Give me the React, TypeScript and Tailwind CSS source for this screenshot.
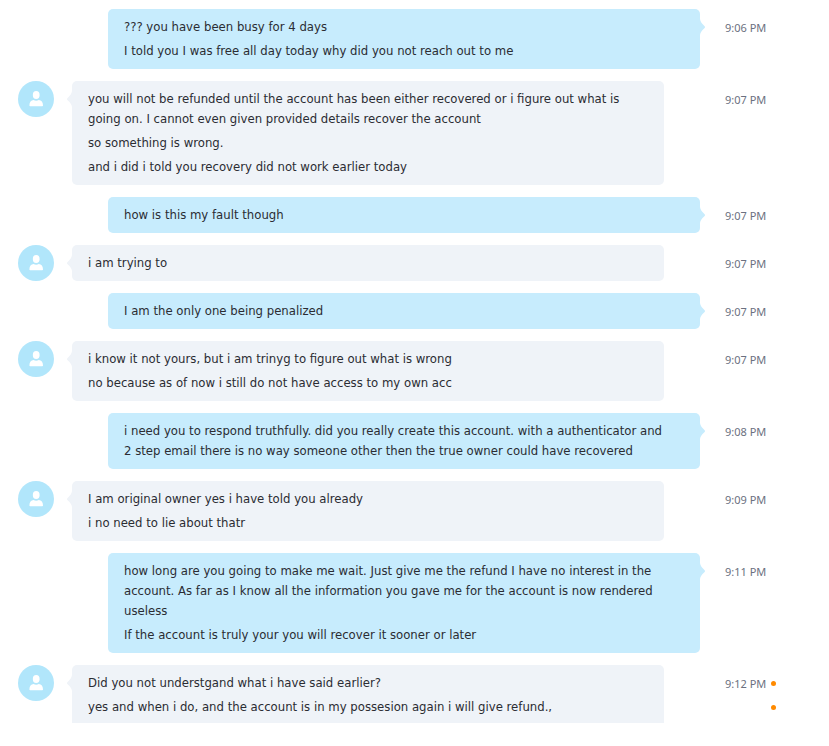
type Message = {
  own?: boolean;
  time: string;
  lines: string[];
  unread?: boolean;
};

const messages: Message[] = [
  {
    own: true,
    time: "9:06 PM",
    lines: [
      "??? you have been busy for 4 days",
      "I told you I was free all day today why did you not reach out to me",
    ],
  },
  {
    time: "9:07 PM",
    lines: [
      "you will not be refunded until the account has been either recovered or i figure out what is going on. I cannot even given provided details recover the account",
      "so something is wrong.",
      "and i did i told you recovery did not work earlier today",
    ],
  },
  { own: true, time: "9:07 PM", lines: ["how is this my fault though"] },
  { time: "9:07 PM", lines: ["i am trying to"] },
  { own: true, time: "9:07 PM", lines: ["I am the only one being penalized"] },
  {
    time: "9:07 PM",
    lines: [
      "i know it not yours, but i am trinyg to figure out what is wrong",
      "no because as of now i still do not have access to my own acc",
    ],
  },
  {
    own: true,
    time: "9:08 PM",
    lines: [
      "i need you to respond truthfully. did you really create this account. with a authenticator and 2 step email there is no way someone other then the true owner could have recovered",
    ],
  },
  {
    time: "9:09 PM",
    lines: ["I am original owner yes i have told you already", "i no need to lie about thatr"],
  },
  {
    own: true,
    time: "9:11 PM",
    lines: [
      "how long are you going to make me wait. Just give me the refund I have no interest in the account. As far as I know all the information you gave me for the account is now rendered useless",
      "If the account is truly your you will recover it sooner or later",
    ],
  },
  {
    time: "9:12 PM",
    unread: true,
    lines: [
      "Did you not understgand what i have said earlier?",
      "yes and when i do, and the account is in my possesion again i will give refund.,",
    ],
  },
];

function Avatar() {
  return (
    <div className="size-9 shrink-0 rounded-full bg-[#b1e6fb]">
      <svg viewBox="0 0 36 36" className="size-9" fill="#fff" aria-hidden="true">
        <ellipse cx="18.2" cy="14" rx="3.4" ry="4" />
        <path d="M12.2 25.2c-.5 0-.8-.3-.8-.8 0-3 1.6-5.2 4.2-5.300.8.5 1.600.7 2.600.7s1.800-.2 2.600-.7c2.600.1 4.200 2.300 4.200 5.300 0 .5-.3.8-.8.8z" />
      </svg>
    </div>
  );
}

function Tail({ own }: { own?: boolean }) {
  return (
    <svg
      viewBox="0 0 5 18"
      aria-hidden="true"
      className={
        own
          ? "absolute top-[9px] left-full h-[18px] w-[5px] text-[#c7ecfd]"
          : "absolute top-[9px] right-full h-[18px] w-[5px] -scale-x-100 text-[#eff3f8]"
      }
    >
      <path fill="currentColor" d="M0 1C.4 3.5 1.5 5.3 4.4 8 5.300 8.900 5.300 9.300 4.400 10.200 1.500 12.800.4 14.500 0 17z" />
    </svg>
  );
}

function MessageRow({ message, last }: { message: Message; last: boolean }) {
  const { own, lines, time, unread } = message;
  return (
    <li className="flex items-start">
      {own ? <div className="w-[90px] shrink-0" /> : <Avatar />}
      <div
        className={`relative flex min-w-0 flex-1 flex-col gap-1 pt-2 pr-8 pl-4 ${
          own ? "bg-[#c7ecfd]" : "mr-9 ml-[18px] bg-[#eff3f8]"
        } ${last ? "rounded-t-[5px] pb-1.5" : "rounded-[5px] pb-2"}`}
      >
        <Tail own={own} />
        {lines.map((line) => (
          <p key={line}>{line}</p>
        ))}
      </div>
      <div className="flex w-[129px] shrink-0 gap-1.5 pt-2 pl-[25px]">
        <time className="w-10 pt-px font-['Noto_Sans',sans-serif] text-[11px] whitespace-nowrap text-[#6b7080]">
          {time}
        </time>
        {unread && (
          <div className="flex flex-col gap-1">
            {lines.map((line) => (
              <span key={line} className="flex h-5 items-center">
                <span className="size-[5px] rounded-full bg-[#ff8a00]" />
              </span>
            ))}
          </div>
        )}
      </div>
    </li>
  );
}

export default function App() {
  return (
    <main className="min-h-screen bg-white font-['DejaVu_Sans_Condensed','DejaVu_Sans',sans-serif] text-[13px] leading-5 text-[#2b2c33]">
      <ul className="flex flex-col gap-3 pt-[9px] pl-[18px]">
        {messages.map((message, index) => (
          <MessageRow key={index} message={message} last={index === messages.length - 1} />
        ))}
      </ul>
    </main>
  );
}
